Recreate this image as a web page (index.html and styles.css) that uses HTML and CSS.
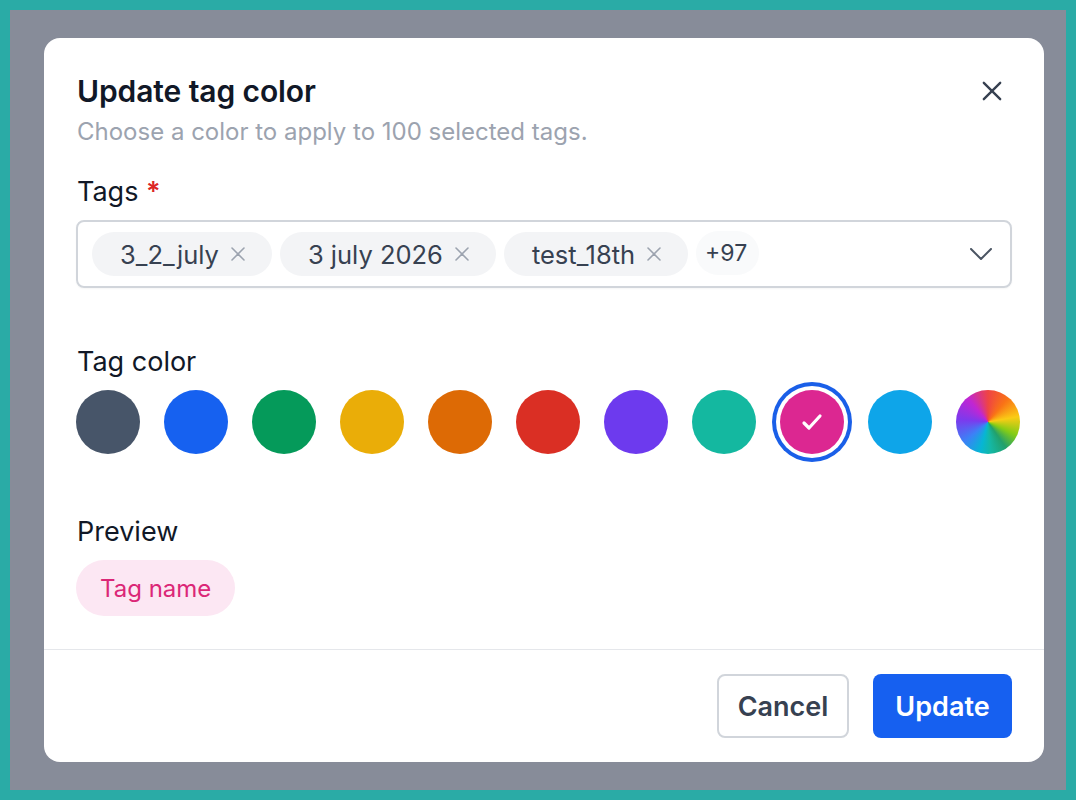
FILE: index.html
```html
<!DOCTYPE html>
<html>
<head>
<meta charset="utf-8">
<link rel="stylesheet" href="styles.css">
</head>
<body>
<div class="frame">
  <div class="overlay">
    <div class="modal">
      <div class="body">
        <div class="header">
          <div>
            <h1 class="title">Update tag color</h1>
            <p class="subtitle">Choose a color to apply to 100 selected tags.</p>
          </div>
          <button class="close" aria-label="Close">
            <svg width="22" height="22" viewBox="0 0 22 22" fill="none" stroke="#374151" stroke-width="2.6" stroke-linecap="round"><path d="M2 2L20 20M20 2L2 20"/></svg>
          </button>
        </div>

        <div class="field tags-field">
          <label class="label">Tags <span class="req">*</span></label>
          <div class="select">
            <div class="chips">
              <span class="chip">3_2_july <svg class="x" width="14" height="14" viewBox="0 0 14 14" stroke="#9ca3af" stroke-width="1.6" stroke-linecap="round"><path d="M1 1L13 13M13 1L1 13"/></svg></span>
              <span class="chip">3 july 2026 <svg class="x" width="14" height="14" viewBox="0 0 14 14" stroke="#9ca3af" stroke-width="1.6" stroke-linecap="round"><path d="M1 1L13 13M13 1L1 13"/></svg></span>
              <span class="chip">test_18th <svg class="x" width="14" height="14" viewBox="0 0 14 14" stroke="#9ca3af" stroke-width="1.6" stroke-linecap="round"><path d="M1 1L13 13M13 1L1 13"/></svg></span>
              <span class="more">+97</span>
            </div>
            <svg class="chev" width="22" height="12" viewBox="0 0 22 12" fill="none" stroke="#4b5563" stroke-width="2" stroke-linecap="round" stroke-linejoin="round"><path d="M1 1L11 11L21 1"/></svg>
          </div>
        </div>

        <div class="field colors-field">
          <label class="label">Tag color</label>
          <div class="swatches">
            <span class="sw c-slate"></span>
            <span class="sw c-blue"></span>
            <span class="sw c-green"></span>
            <span class="sw c-yellow"></span>
            <span class="sw c-orange"></span>
            <span class="sw c-red"></span>
            <span class="sw c-purple"></span>
            <span class="sw c-teal"></span>
            <span class="sw c-pink selected">
              <svg width="22" height="18" viewBox="0 0 22 18" fill="none" stroke="#fff" stroke-width="3.2" stroke-linecap="round" stroke-linejoin="round"><path d="M3 10L8 15L19 3"/></svg>
            </span>
            <span class="sw c-sky"></span>
            <span class="sw c-rainbow"></span>
          </div>
        </div>

        <div class="field preview-field">
          <label class="label">Preview</label>
          <div class="preview-row"><span class="preview">Tag name</span></div>
        </div>
      </div>
      <div class="footer">
        <button class="btn cancel">Cancel</button>
        <button class="btn update">Update</button>
      </div>
    </div>
  </div>
</div>
</body>
</html>
```
FILE: styles.css
```css
* { box-sizing: border-box; }
html, body { margin: 0; padding: 0; }
body {
  width: 1076px;
  height: 800px;
  font-family: Inter, "Noto Sans", sans-serif;
  overflow: hidden;
}
.frame {
  width: 1076px;
  height: 800px;
  background: #2aaba6;
  padding: 10px;
}
.overlay {
  width: 100%;
  height: 100%;
  background: #878c99;
  padding: 28px 0 0 34px;
}
.modal {
  width: 1000px;
  height: 724px;
  background: #fff;
  border-radius: 16px;
  display: flex;
  flex-direction: column;
  overflow: hidden;
}
.body {
  padding: 35px 32px 0 32px;
  flex: 1;
}
.header {
  display: flex;
  justify-content: space-between;
  align-items: flex-start;
}
.title {
  margin: 0;
  font-size: 30px;
  font-weight: 600;
  color: #111827;
  line-height: 36px;
  letter-spacing: -0.1px;
  padding-left: 1px;
}
.subtitle {
  margin: 8px 0 0 1px;
  font-size: 24px;
  line-height: 30px;
  color: #9ca3af;
}
.close {
  background: none;
  border: 0;
  padding: 0;
  margin: 7px 9px 0 0;
  width: 22px;
  height: 22px;
  cursor: pointer;
}
.close svg { display: block; width: 20px; height: 20px; margin: 1px; }
.label {
  display: block;
  font-size: 27px;
  line-height: 34px;
  color: #111827;
  padding-left: 1px;
}
.req { color: #dc2626; font-weight: 600; }
.tags-field { margin-top: 28px; }
.select {
  margin-top: 11px;
  height: 68px;
  border: 2px solid #d1d5db;
  border-radius: 8px;
  display: flex;
  align-items: center;
  justify-content: space-between;
  padding: 0 18px 0 14px;
  box-shadow: 0 1px 2px rgba(0,0,0,0.04);
}
.chips { display: flex; gap: 8px; align-items: center; }
.chip {
  height: 44px;
  border-radius: 22px;
  background: #f3f4f6;
  color: #374151;
  font-size: 25.5px;
  display: inline-flex;
  align-items: center;
  gap: 12px;
  padding: 0 27px 0 28px;
}
.chip .x { display: block; }
.more {
  height: 44px;
  padding: 0 12px 0 9px;
  border-radius: 22px;
  background: #f9fafb;
  color: #374151;
  font-size: 23px;
  display: inline-flex;
  align-items: center;
  margin-top: -2px;
}
.chev { display: block; }
.colors-field { margin-top: 57px; }
.swatches {
  margin-top: 11px;
  display: flex;
  gap: 24px;
  height: 64px;
  align-items: center;
}
.sw {
  width: 64px;
  height: 64px;
  border-radius: 50%;
  flex: none;
  display: flex;
  align-items: center;
  justify-content: center;
}
.c-slate { background: #475569; }
.c-blue { background: #1661f0; }
.c-green { background: #059a5a; }
.c-yellow { background: #eaad08; }
.c-orange { background: #dd6a05; }
.c-red { background: #da2f24; }
.c-purple { background: #6d3aee; }
.c-teal { background: #14b8a0; }
.c-pink { background: #dc2791; }
.c-sky { background: #0ea5e9; }
.c-rainbow {
  background: conic-gradient(from 0deg, #ef4444 0deg, #f97316 40deg, #facc15 80deg, #84cc16 115deg, #22a06b 145deg, #14b8a6 175deg, #06b6d4 195deg, #3b82f6 230deg, #7c3aed 275deg, #c026d3 320deg, #ef4444 360deg);
}
.selected {
  box-shadow: 0 0 0 4px #fff, 0 0 0 8px #1a5fe8;
}
.preview-field { margin-top: 61px; }
.preview-row { margin-top: 11px; display: flex; }
.preview {
  display: inline-flex;
  align-items: center;
  height: 56px;
  padding: 0 24px;
  border-radius: 28px;
  background: #fce7f3;
  color: #db2777;
  font-size: 24px;
}
.footer {
  border-top: 1px solid #e5e7eb;
  height: 113px;
  display: flex;
  justify-content: flex-end;
  align-items: flex-start;
  gap: 24px;
  padding: 24px 32px 0 0;
}
.btn {
  height: 64px;
  border-radius: 8px;
  font-family: Inter, "Noto Sans", sans-serif;
  font-size: 27px;
  font-weight: 600;
  padding: 0;
  cursor: pointer;
}
.cancel {
  background: #fff;
  border: 2px solid #d1d5db;
  color: #374151;
  width: 132px;
}
.update {
  background: #1660f0;
  border: 0;
  color: #fff;
  width: 139px;
}
```
